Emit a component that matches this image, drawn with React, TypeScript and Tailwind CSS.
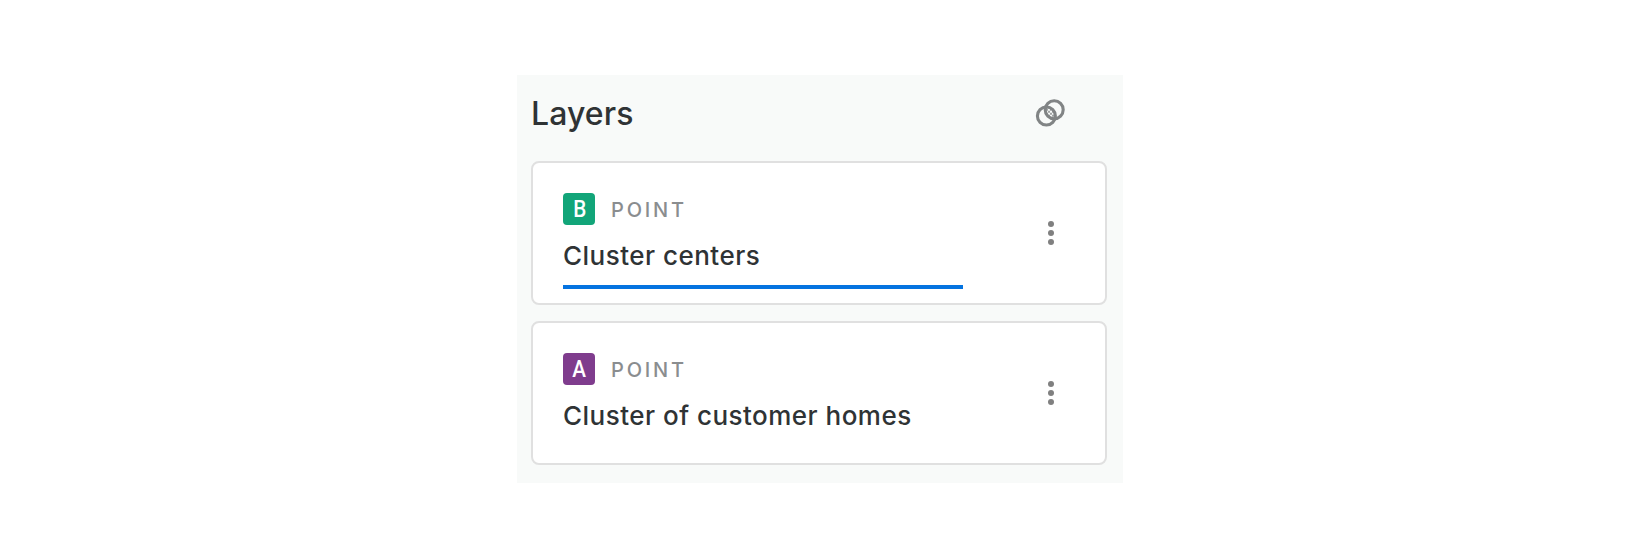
type Layer = { letter: string; badge: string; name: string; active?: boolean };

const layers: Layer[] = [
  { letter: "B", badge: "bg-[#12a579]", name: "Cluster centers", active: true },
  { letter: "A", badge: "bg-[#7f3c8d]", name: "Cluster of customer homes" },
];

function BlendIcon() {
  return (
    <svg width="40" height="40" viewBox="0 0 40 40" fill="none" className="text-[#818485]">
      <circle cx="24.2" cy="15.8" r="9" stroke="currentColor" strokeWidth="3.1" />
      <circle cx="16.4" cy="22" r="9" stroke="currentColor" strokeWidth="3.1" />
      <path
        d="M16 14.8h2v2h-2zM18 16.8h2v2h-2zM20 14.8h1v2h-1zM16.5 18.8h1.5v1.5h-1.5zM20 18.8h2v2h-2zM18 20.8h2v2h-2zM22 17h1v1.8h-1zM22 20.8h2v2h-2zM20 22.8h2v1.5h-2z"
        fill="currentColor"
        opacity="0.75"
      />
    </svg>
  );
}

function DotsIcon() {
  return (
    <svg width="6" height="24" viewBox="0 0 6 24" fill="#808080">
      <circle cx="3" cy="3" r="3" />
      <circle cx="3" cy="12" r="3" />
      <circle cx="3" cy="21" r="3" />
    </svg>
  );
}

function LayerCard({ layer }: { layer: Layer }) {
  return (
    <div className="flex h-36 justify-between rounded-lg border-2 border-[#e0e0e0] bg-white pl-[30px] pr-[51px] pt-[30px]">
      <div className="w-[400px]">
        <div className="flex h-8 items-center gap-4">
          <span className={`flex size-8 items-center justify-center rounded ${layer.badge}`}>
            <span className="translate-x-[0.5px] translate-y-px scale-x-90 font-['Roboto',sans-serif] text-[23px] font-medium leading-8 text-white">
              {layer.letter}
            </span>
          </span>
          <span className="pt-[2px] text-[20px] font-medium leading-6 tracking-[2.8px] text-[#8a8d8f]">POINT</span>
        </div>
        <div
          className={`h-16 whitespace-nowrap border-b-4 pt-[15px] text-[26px] font-medium leading-8 tracking-[0.48px] ${
            layer.active ? "border-[#0473e0]" : "border-transparent"
          }`}
        >
          {layer.name}
        </div>
      </div>
      <button type="button" aria-label="Layer options" className="h-6 pt-[28px]">
        <DotsIcon />
      </button>
    </div>
  );
}

export default function App() {
  return (
    <main className="flex h-[559px] w-[1640px] items-start justify-center bg-white pt-[75px] font-['Inter',sans-serif] text-[#2f3335]">
      <section className="h-[408px] w-[606px] bg-[#f8faf9] pl-[14px] pr-4">
        <header className="flex h-[86px] items-start justify-between pr-[37px] pt-[19px]">
          <h2 className="text-[32px] font-medium leading-10 tracking-[0.1px]">Layers</h2>
          <BlendIcon />
        </header>
        <div className="flex flex-col gap-4">
          {layers.map((layer) => (
            <LayerCard key={layer.letter} layer={layer} />
          ))}
        </div>
      </section>
    </main>
  );
}
